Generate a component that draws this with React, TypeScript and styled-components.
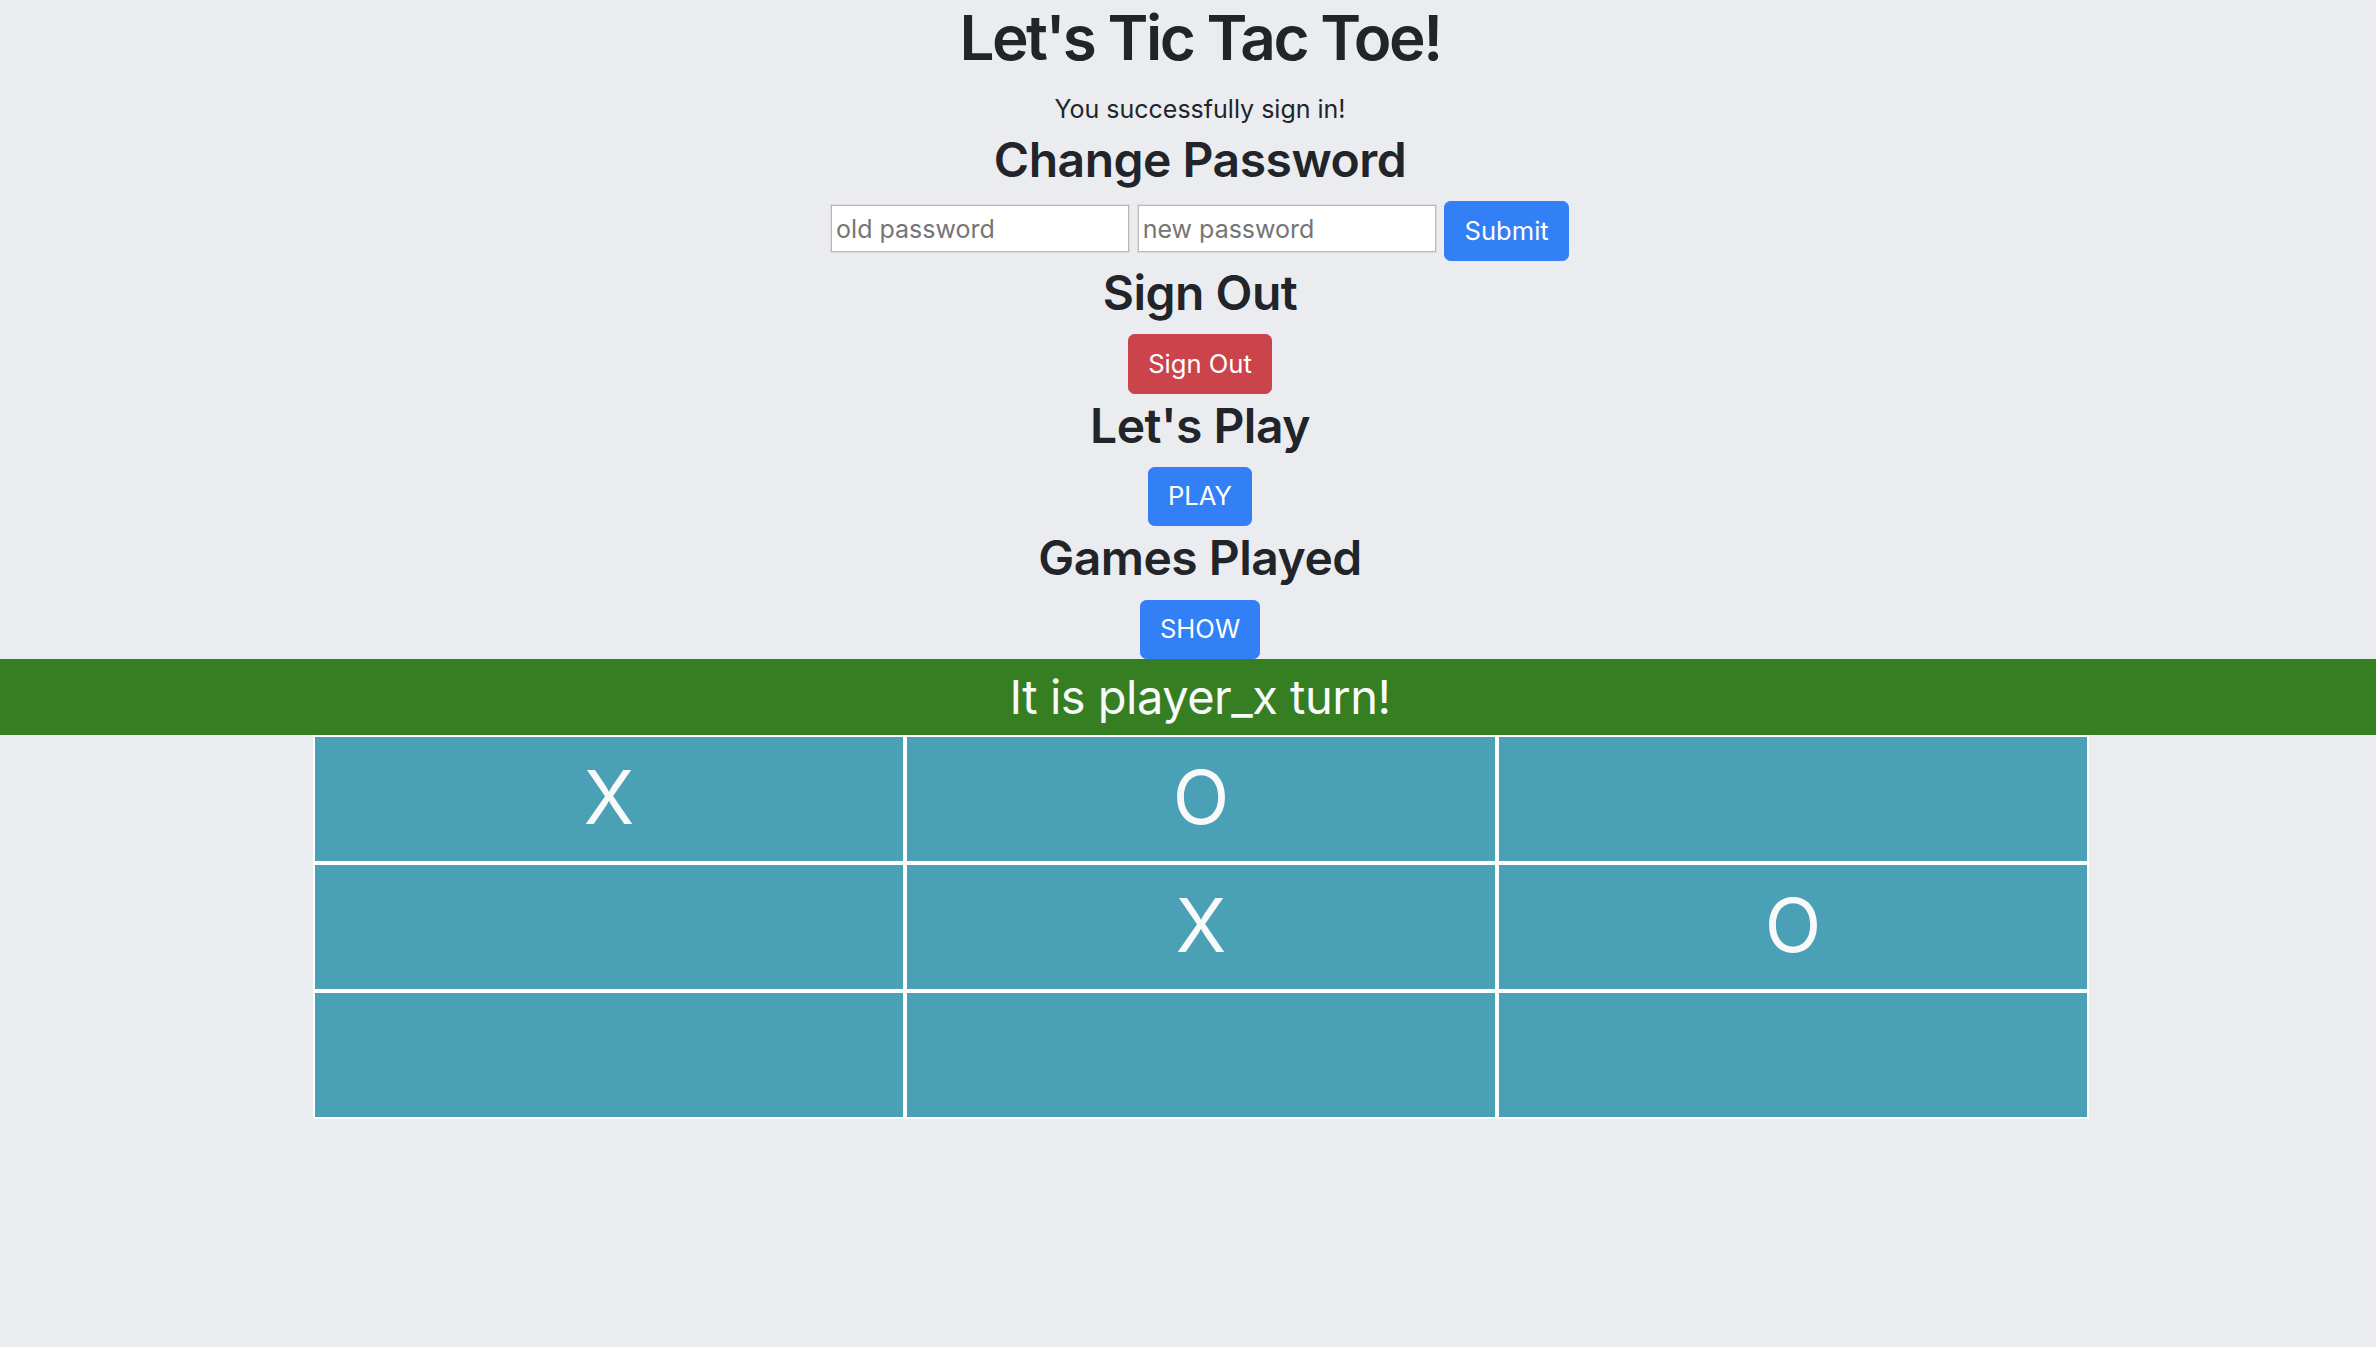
import React from "react";
import styled, { createGlobalStyle } from "styled-components";

const GlobalStyle = createGlobalStyle`
  html, body {
    margin: 0;
    padding: 0;
    background: #ebecf0;
  }
  body {
    font-family: Inter, "Noto Sans", "Liberation Sans", sans-serif;
    color: #212529;
    font-size: 25.6px;
    line-height: 1.5;
  }
  * { box-sizing: border-box; }
`;

const Page = styled.div`
  display: flex;
  flex-direction: column;
  min-height: 1347px;
`;

const Top = styled.section`
  display: flex;
  flex-direction: column;
  align-items: center;
  padding-left: 24px;
  text-align: center;
`;

const Title = styled.h1`
  margin: 0 0 12.8px;
  font-size: 62px;
  font-weight: 580;
  letter-spacing: -2.5px;
  line-height: 76.8px;
`;

const Notice = styled.p`
  margin: 0;
  font-size: 25px;
  line-height: 38.4px;
`;

const Heading = styled.h2`
  margin: 0 0 11.2px;
  padding-top: 2px;
  font-size: 48px;
  font-weight: 580;
  letter-spacing: -0.5px;
  line-height: 60px;
`;

const FormRow = styled.form`
  display: flex;
  align-items: flex-start;
  gap: 8.6px;
  margin: 0;
`;

const Field = styled.input`
  width: 298px;
  height: 47px;
  margin-top: 4px;
  padding: 0 4px;
  border: 1px solid #b9b9b9;
  box-shadow: 0 0 0 1px #dcdcdc;
  background: #fff;
  font-family: inherit;
  font-size: 25px;
  color: #212529;
  &::placeholder { color: #757575; }
`;

const Button = styled.button<{ $tone?: "primary" | "danger" }>`
  display: inline-block;
  padding: 9.6px 19.2px;
  border: 1.6px solid ${(p) => (p.$tone === "danger" ? "#cc444b" : "#3380f6")};
  border-radius: 6.4px;
  background: ${(p) => (p.$tone === "danger" ? "#cc444b" : "#3380f6")};
  color: #fff;
  font-family: inherit;
  font-size: 25.6px;
  line-height: 38.4px;
  font-weight: 400;
  cursor: pointer;
`;

const Banner = styled.div`
  height: 76px;
  background: #367e22;
  color: #f8f9fa;
  display: flex;
  align-items: center;
  justify-content: center;
  padding-left: 24px;
  font-size: 47px;
  letter-spacing: -0.5px;
  font-weight: 400;
  line-height: 61.44px;
`;

const BoardWrap = styled.section`
  display: flex;
  justify-content: center;
  padding-left: 26px;
`;

const Board = styled.div`
  width: 1776px;
  display: grid;
  grid-template-columns: repeat(3, 1fr);
`;

const Cell = styled.div`
  height: 128px;
  border: 2px solid #ffffff;
  background: #4aa0b5;
  color: #f8f9fa;
  display: flex;
  align-items: center;
  justify-content: center;
  font-size: 74px;
  font-weight: 400;
  line-height: 1;
  padding-bottom: 4px;
`;

const cells = ["X", "O", "", "", "X", "O", "", "", ""];

export default function App() {
  return (
    <Page>
      <GlobalStyle />
      <Top>
        <Title>Let's Tic Tac Toe!</Title>
        <Notice>You successfully sign in!</Notice>
        <Heading>Change Password</Heading>
        <FormRow onSubmit={(e) => e.preventDefault()}>
          <Field type="password" placeholder="old password" />
          <Field type="password" placeholder="new password" />
          <Button type="submit">Submit</Button>
        </FormRow>
        <Heading>Sign Out</Heading>
        <Button $tone="danger">Sign Out</Button>
        <Heading>Let's Play</Heading>
        <Button>PLAY</Button>
        <Heading>Games Played</Heading>
        <Button>SHOW</Button>
      </Top>
      <Banner>It is player_x turn!</Banner>
      <BoardWrap>
        <Board>
          {cells.map((c, i) => (
            <Cell key={i}>{c}</Cell>
          ))}
        </Board>
      </BoardWrap>
    </Page>
  );
}
